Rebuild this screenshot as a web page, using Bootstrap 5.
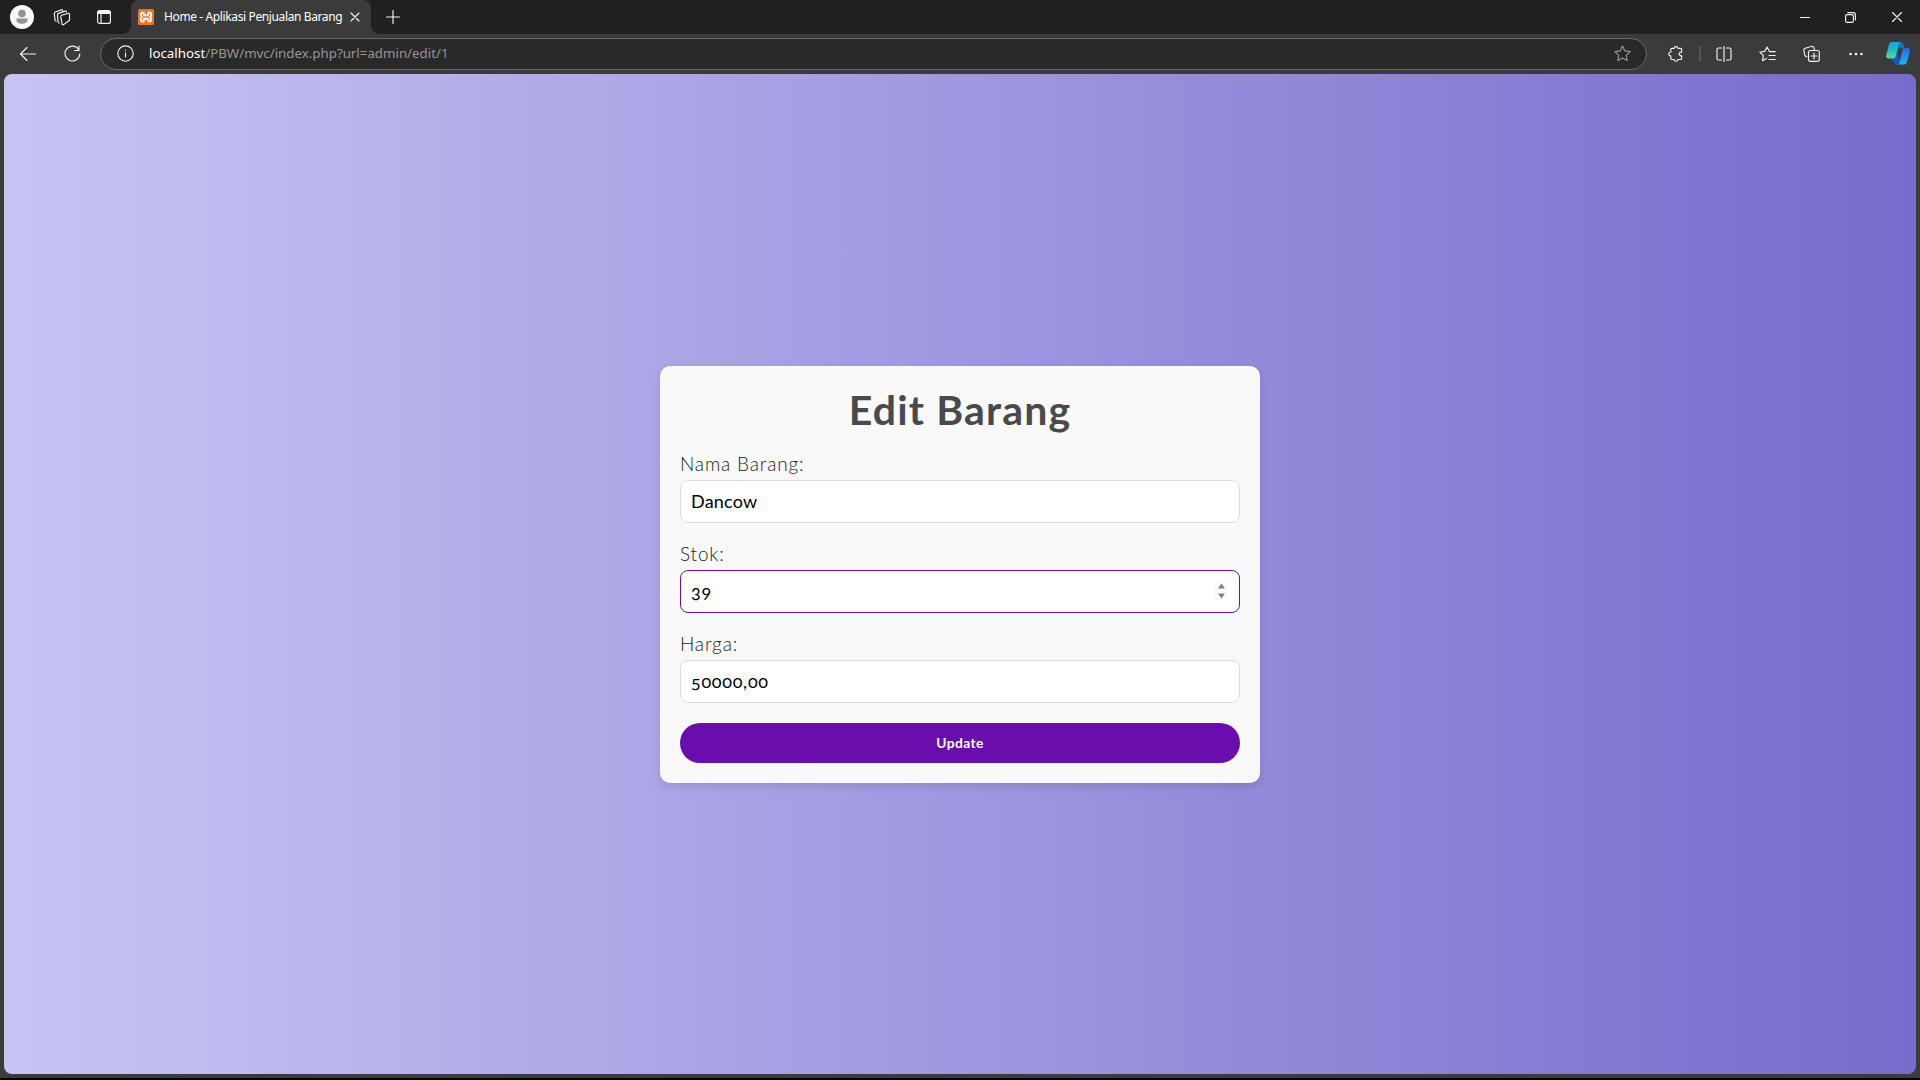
<!DOCTYPE html>
<html lang="id">
<head>
<meta charset="utf-8">
<title>Home - Aplikasi Penjualan Barang</title>
<link href="https://cdn.jsdelivr.net/npm/bootstrap@5.3.0/dist/css/bootstrap.min.css" rel="stylesheet">
<style>
body{height:1080px;overflow:hidden;background:#3b3b3b;border-bottom:2px solid #000;font-family:Lato,"Open Sans",sans-serif}
svg{display:block;flex:none;fill:none;stroke:#f2f2f2;stroke-width:1.15;stroke-linecap:round;stroke-linejoin:round}
.titlebar{height:34px;background:#202020;font-family:"Noto Sans",sans-serif;padding-left:10px}
.ico-profile{stroke:none}
.ico-spaces{margin-left:19px}
.ico-tabs{margin-left:26px}
.tab-current{width:240px;height:34px;background:#3b3b3b;border-radius:8px 8px 0 0;padding-left:7px;position:relative;margin-left:20px}
.tab-current::before,.tab-current::after{content:"";position:absolute;bottom:0;width:8px;height:8px}
.tab-current::before{left:-8px;background:radial-gradient(circle at 0 0,#202020 7.5px,#3b3b3b 8px)}
.tab-current::after{right:-8px;background:radial-gradient(circle at 100% 0,#202020 7.5px,#3b3b3b 8px)}
.tab-title{width:178px;margin-left:10px;font-size:12px;color:#fff;white-space:nowrap;letter-spacing:-.38px}
.ico-plus{margin-left:15px}
.ico-restore{margin:0 36px 0 35px}
.ico-close{margin-right:18px}
.toolbar{height:40px;padding:4px 7px 5px 19px}
.ico-reload{margin-left:27px}
.address{width:1547px;height:32px;border:1px solid #686868;border-radius:16px;background:#292929;margin-left:19px;padding:0 15px 0 16px;color:#969696;font-family:"Noto Sans",sans-serif;font-size:13.3px}
.url-text{margin-left:15px;padding-top:1px}
.ico-star{stroke:#969696}
.ico-ext{margin-left:21px}
.ico-sep{margin-left:15px;stroke:#666}
.ico-split{margin-left:15px}
.ico-fav{margin-left:27px}
.ico-coll{margin-left:27px}
.ico-dots{margin-left:28px;stroke:none;fill:#f2f2f2}
.ico-copilot{margin-left:22px;stroke:none}
.viewport{height:1000px;margin:0 4px;border-radius:8px;background:linear-gradient(90deg,#c7c5f4,#776bcc)}
.edit-panel{width:600px;height:417px;padding:20px;border:0;border-radius:10px;background:#f9f9f9;box-shadow:0 4px 10px rgba(0,0,0,.1);color:#4a4a4a}
.edit-panel h1{font-size:41px;line-height:48px;margin:0 0 19px;font-weight:700;letter-spacing:1.15px}
.edit-panel label{font-size:19px;line-height:22px;margin-bottom:5px;display:block;letter-spacing:.85px;font-weight:300;color:#222}
.field-group{margin-bottom:20px}
.field-box{height:43px;padding:9px 10px 11px;font-size:18px;line-height:22px;border:1px solid #ddd;border-radius:8px;color:#000;background:#fff;letter-spacing:.2px}
.field-box.is-number{font-variant-numeric:oldstyle-nums;letter-spacing:.7px}
.field-box.is-active{border-color:#6a0dad}
.spinner-arrows{width:15px;height:20px;margin-top:1px;background:#fbfbfb;stroke:none;fill:#808080}
.update-btn{height:40px;border-radius:20px;background:#6a0dad;color:#fff;font-size:13.8px;font-weight:700;border:0;letter-spacing:.4px;padding-top:3px}
</style>
<script src="https://cdn.jsdelivr.net/npm/bootstrap@5.3.0/dist/js/bootstrap.bundle.min.js"></script>
</head>
<body>
<header class="titlebar d-flex align-items-center">
<svg class="ico-profile" width="24" height="24"><circle cx="12" cy="12" r="12" fill="#f8f8f8"/><circle cx="12" cy="8.600" r="3.800" fill="#939393"/><path d="M6.500 13.500h11v1.400c0 5-11 5-11 0z" fill="#939393"/></svg>
<svg class="ico-spaces" width="18" height="17" viewBox="0 0 18 17"><path d="m8.800 6.200 6.400-1.900q1.300-.3 1.300 1v5.200q0 1-.9 1.500l-5 3.600q-1.200.8-1.500-.5L7.800 7.800q-.2-1.200 1-1.600zM6.300 14q-1 .2-1.200-1L4.500 6q0-1.200 1-1.600l6.800-2.300q1-.3 1.200.8M3.300 12q-1.200.2-1.300-1L1.300 4.600Q1.200 3.400 2.300 3L8.500.9q1-.3 1.300.6"/></svg>
<svg class="ico-tabs" width="14" height="14" viewBox="0 0 14 14"><rect x=".6" y=".6" width="12.800" height="12.800" rx="2"/><path d="M1.500 2.500h11" stroke-width="2.800"/><path d="M4 4v9"/></svg>
<div class="tab-current d-flex align-items-center">
<svg width="16" height="16" viewBox="0 0 16 16"><rect width="16" height="16" rx="1.500" fill="#f37321" stroke="none"/><path d="M4 8C1.500 6 3.300 2.800 5.300 3.700Q6.300 4.200 6 6.200h4Q9.700 4.200 10.700 3.700C12.700 2.800 14.500 6 12 8c2.500 2 .7 5.200-1.300 4.300Q9.700 11.800 10 9.800H6q.3 2-.7 2.500C3.300 13.200 1.500 10 4 8z" stroke="#fff" stroke-width="1.900"/></svg>
<span class="tab-title">Home - Aplikasi Penjualan Barang</span>
<svg class="ms-2" width="10" height="10"><path d="m1 1 8 8M9 1 1 9"/></svg>
</div>
<svg class="ico-plus" width="14" height="14"><path d="M7 .5v13M.5 7h13"/></svg>
<div class="ms-auto d-flex align-items-center">
<svg width="10" height="11"><path d="M0 5.500h10"/></svg>
<svg class="ico-restore" width="11" height="11"><rect x=".6" y="2.600" width="7.800" height="7.800" rx="1.500"/><path d="M2.800.6H8q2.400 0 2.400 2.400v5"/></svg>
<svg class="ico-close" width="10" height="10"><path d="m.5.5 9 9M9.500.5l-9 9"/></svg>
</div>
</header>
<nav class="toolbar d-flex align-items-center">
<svg width="18" height="16"><path d="M16.500 8H1.500M8 1.500 1.500 8 8 14.500"/></svg>
<svg class="ico-reload" width="17" height="17"><path d="M14.600 4.500A7.400 7.400 0 1 0 15.800 9M15 1v4.500h-4.500"/></svg>
<div class="address d-flex align-items-center">
<svg width="17" height="17"><circle cx="8.500" cy="8.500" r="7.700"/><path d="M8.500 7.800v4.200M8.500 5v.3"/></svg>
<span class="url-text"><span class="text-white">localhost</span>/PBW/mvc/index.php?url=admin/edit/1</span>
<svg class="ms-auto ico-star" width="17" height="17" viewBox="0 0 17 17"><path d="m8.500 1 2.300 4.900 5.300.7-3.900 3.700 1 5.300-4.700-2.600-4.700 2.600 1-5.300L.9 6.600l5.300-.7z"/></svg>
</div>
<svg class="ico-ext" width="16" height="16" viewBox="0 0 16 16"><path d="M3.800 2.400h2.400c.4-2.300 3.400-2.300 3.800 0h2.600q1 0 1 1v2.700c-3.200-.2-3.200 3.900 0 3.700v2.700q0 1-1 1H10c-.4 2.300-3.400 2.300-3.800 0H3.800q-1 0-1-1V9.900C0 9.500 0 6.400 2.800 6V3.400q0-1 1-1z"/></svg>
<svg class="ico-sep" width="2" height="16"><path d="M1 0v16"/></svg>
<svg class="ico-split" width="16" height="16"><path d="M5.500 2H2.500Q1 2 1 3.500v9Q1 14 2.500 14h3M10.500 2h3Q15 2 15 3.500v9q0 1.500-1.500 1.500h-3M8 .5v15"/></svg>
<svg class="ico-fav" width="17" height="16"><path d="M10.500 5.600 8 1 5.700 5.400.8 6.200l3.600 3.500-.9 5L7.500 12.500M10.500 5.600h5.800M10 9.500h6.300M10 13.500h6.300"/></svg>
<svg class="ico-coll" width="17" height="17"><path d="M3.800 11.800Q2.200 11.500 1.800 10L.8 5.500q-.3-1.700 1.500-2.200L8 1.500q2-.7 2.800 1l.7 2"/><rect x="5.500" y="5.500" width="10.800" height="10.800" rx="2"/><path d="M11 8v6M8 11h6"/></svg>
<svg class="ico-dots" width="16" height="4"><circle cx="2.500" cy="2" r="1.300"/><circle cx="8" cy="2" r="1.300"/><circle cx="13.500" cy="2" r="1.300"/></svg>
<svg class="ico-copilot" width="24" height="23" viewBox="0 0 24 23"><defs><linearGradient id="ca" x2="0" y2="1"><stop stop-color="#17a7e8"/><stop offset=".5" stop-color="#19b9cc"/><stop offset="1" stop-color="#65d98a"/></linearGradient><linearGradient id="cb" x2="0" y2="1"><stop stop-color="#2a68da"/><stop offset="1" stop-color="#18b5f6"/></linearGradient></defs><path d="M13 0h2q2 0 2.800 2.500L18.700 6H15q-2 0-2.700 2z" fill="#146fc9"/><path d="M5.500 16.500H7q2 0 2.800-2l1.500-4.500 2.700 10q-.7 2.500-3 2.500-2.700 0-3.600-2.500z" fill="#1756ca"/><path d="M5.500 0H15q-1.300 0-2 2L10 14q-.8 2.500-3 2.500H2.500Q-.5 16.500.3 13L3 2.500Q3.700 0 5.500 0z" fill="url(#ca)"/><path d="M17 6h4.500q3 0 2.300 3.500L21 20q-.7 2.500-2.500 2.500H11q2 0 2.600-2.500l3-12q.4-1.500.4-2z" fill="url(#cb)"/></svg>
</nav>
<main class="viewport d-flex align-items-center justify-content-center">
<form class="edit-panel card">
<h1 class="text-center">Edit Barang</h1>
<div class="field-group"><label>Nama Barang:</label><div class="field-box">Dancow</div></div>
<div class="field-group"><label>Stok:</label><div class="field-box is-number is-active d-flex justify-content-between">39<svg class="spinner-arrows" viewBox="0 0 15 20"><path d="M4 7.500 7.500 2.500 11 7.500zM4 12.500h7l-3.500 5z"/></svg></div></div>
<div class="field-group"><label>Harga:</label><div class="field-box is-number">50000,00</div></div>
<button type="button" class="update-btn">Update</button>
</form>
</main>
</body>
</html>
